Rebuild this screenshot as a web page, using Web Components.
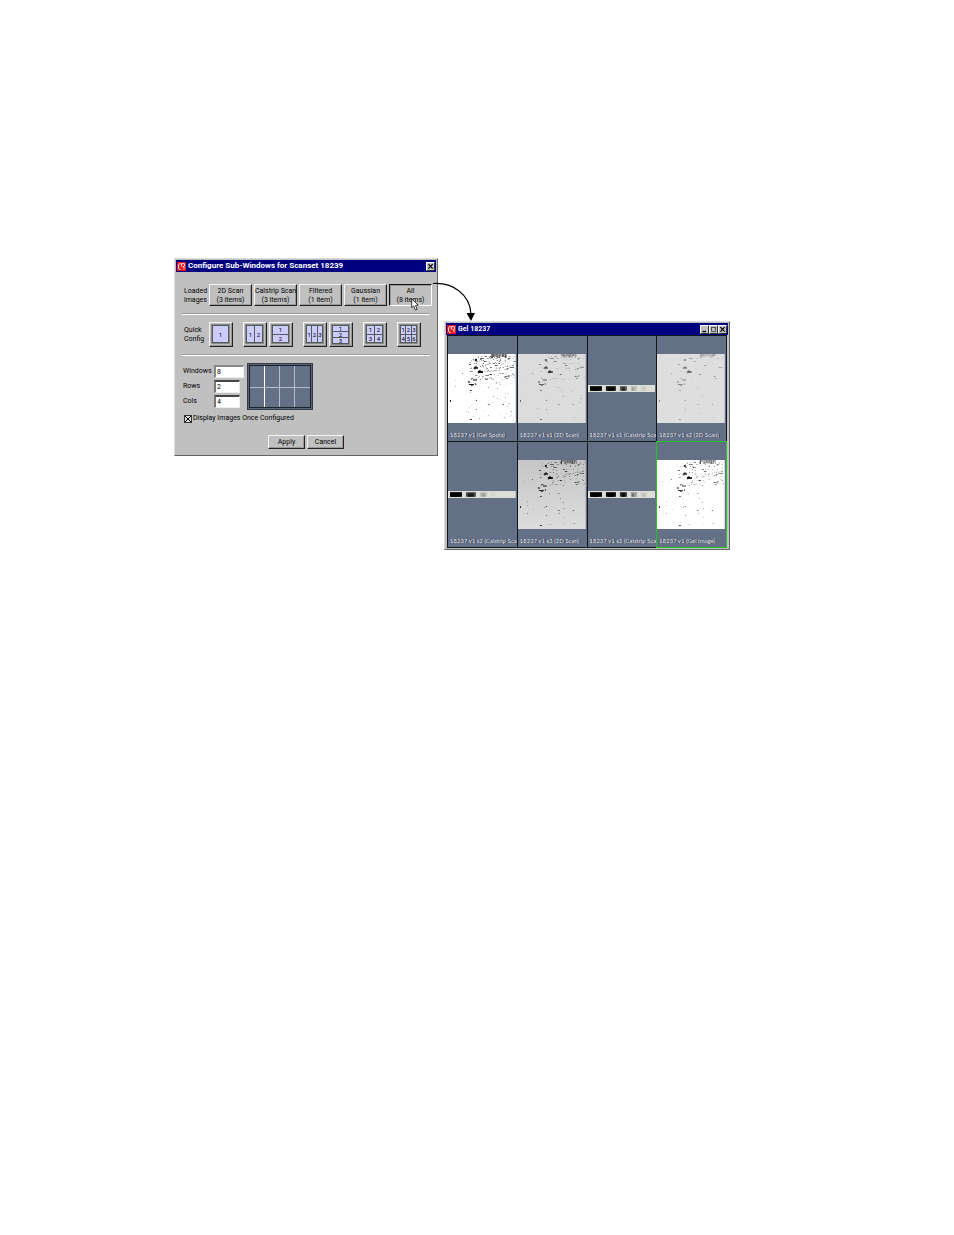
<!DOCTYPE html>
<html lang="en">
<head>
<meta charset="utf-8">
<title>Configure Sub-Windows</title>
<style>
    body {
        margin: 0;
        background: #fff;
        color: #000;
        font: 7px/9px Roboto, "Liberation Sans", Arial, sans-serif;
    }

    /* windows sit freely on the desktop */
    #config {
        position: absolute;
        left: 174px;
        top: 258px;
        width: 264px;
    }

    #gel {
        position: absolute;
        left: 444px;
        top: 321px;
        width: 286px;
    }
</style>
</head>
<body>
<desk-top>
    <app-window id="config" caption="Configure Sub-Windows for Scanset 18239" controls="close">
        <config-form></config-form>
    </app-window>
    <app-window id="gel" caption="Gel 18237" controls="min max close" compact>
        <gel-grid></gel-grid>
    </app-window>
</desk-top>

<script>
class DeskTop extends HTMLElement {

    connectedCallback() {
        this.attachShadow({mode: 'open'}).innerHTML = `
        <style>
        :host {
            display: block;
            position: relative;
            min-height: 100vh;
        }

        svg {
            position: absolute;
            pointer-events: none;
        }

        .arrow {
            left: 430px;
            top: 280px;
        }

        .cursor {
            left: 411px;
            top: 298px;
        }
        </style>
        <slot></slot>
        <svg class="arrow" width="50" height="42" viewBox="0 0 50 42" aria-hidden="true">
            <path d="M3 3.5C22 2 40 14 41 34" fill="none" stroke="#000" stroke-width="1.1"/>
            <path d="M36.5 33L45 33L41 41Z"/>
        </svg>
        <svg class="cursor" width="9" height="13" viewBox="0 0 9 13" aria-hidden="true">
            <path d="M.7 .8V9.6L2.7 7.9L4.4 12L6.2 11.2L4.5 7.3H7.3Z" fill="#fff" stroke="#111" stroke-width=".8"/>
        </svg>
        `;
    }
}

class AppWindow extends HTMLElement {

    connectedCallback() {
        const icons = {
            min: ['Minimize', '<path d="M1.5 5.5H5" stroke="#000" stroke-width="1.4"/>'],
            max: ['Maximize', '<path d="M1.5 1.5H5.5V5.5H1.5Z M1 1.5H6" fill="none" stroke="#555"/>'],
            close: ['Close', '<path d="M1.4 1.2L5.6 5.6M5.6 1.2L1.4 5.6" stroke="#000" stroke-width="1.2"/>']
        };
        const controls = this.getAttribute('controls').split(' ').map(name => `
            <button aria-label="${icons[name][0]}"><svg width="7" height="7" viewBox="0 0 7 7">${icons[name][1]}</svg></button>`).join('');

        this.attachShadow({mode: 'open'}).innerHTML = `
        <style>
        :host {
            display: block;
            box-sizing: border-box;
            background: #c0c0c0;
            border: 1px solid;
            border-color: #dcdcdc #666 #666 #dcdcdc;
            padding: 1px;
        }

        header {
            display: flex;
            align-items: center;
            height: 12px;
            background: #000080;
            color: #fff;
            padding: 0 1px;
            font-weight: bold;
            font-size: 8px;
            line-height: 12px;
        }

        h1 {
            flex: 1;
            margin: 0 0 0 2px;
            font: inherit;
            white-space: nowrap;
        }

        button {
            display: grid;
            place-items: center;
            box-sizing: border-box;
            width: 9px;
            height: 9px;
            padding: 0;
            background: #c0c0c0;
            border: 1px solid;
            border-color: #fff #333 #333 #fff;
        }

        :host([compact]) header {
            font-size: 7px;
        }

        svg {
            flex: none;
        }
        </style>
        <header>
            <svg width="9" height="9" viewBox="0 0 9 9" aria-hidden="true">
                <rect width="9" height="9" fill="#e8131b"/>
                <path d="M3.6 1.6H2.4L1.6 3V6L2.4 7.4H3.8M4.4 4.4V1.7H7.5V4.2M5.4 4.6H7V7.4" fill="none" stroke="#fff" stroke-width=".9"/>
            </svg>
            <h1>${this.getAttribute('caption')}</h1>
            ${controls}
        </header>
        <slot></slot>
        `;
    }
}

class PushButton extends HTMLElement {

    connectedCallback() {
        this.attachShadow({mode: 'open'}).innerHTML = `
        <style>
        :host {
            display: block;
        }

        button {
            box-sizing: border-box;
            width: 100%;
            height: 100%;
            padding: 1px 0 0;
            background: #c0c0c0;
            color: inherit;
            font: inherit;
            text-align: center;
            white-space: nowrap;
            border: 1px solid;
            border-color: #f4f4f4 #222 #222 #f4f4f4;
            box-shadow: inset -1px -1px #999;
        }

        :host([pressed]) button {
            border-color: #111 #fff #fff #111;
            box-shadow: inset 1px 1px #999;
        }
        </style>
        <button aria-pressed="${this.hasAttribute('pressed')}"><slot></slot></button>
        `;
    }
}

class LayoutButton extends HTMLElement {

    connectedCallback() {
        const cols = +this.getAttribute('cols');
        const rows = +this.getAttribute('rows');
        let cells = '';
        for (let i = 1; i <= cols * rows; i++) {
            cells += `<span>${i}</span>`;
        }

        this.attachShadow({mode: 'open'}).innerHTML = `
        <style>
        :host {
            display: block;
            width: 24px;
            height: 25px;
        }

        button {
            box-sizing: border-box;
            display: grid;
            width: 100%;
            height: 100%;
            padding: 1px 2px 2px 1px;
            background: #c0c0c0;
            border: 1px solid;
            border-color: #f4f4f4 #222 #222 #f4f4f4;
            box-shadow: inset -1px -1px #999;
            color: #000;
            font: inherit;
            font-size: 6px;
            line-height: 5px;
        }

        .panes {
            display: grid;
            grid-template: repeat(${rows}, minmax(0, 1fr)) / repeat(${cols}, minmax(0, 1fr));
            gap: 1px;
            padding: 1px;
            background: #555a58;
            border: 1px solid #888c88;
        }

        span {
            display: grid;
            place-items: center;
            background: #ccccff;
        }
        </style>
        <button aria-label="${cols} by ${rows}"><div class="panes">${cells}</div></button>
        `;
    }
}

class ConfigForm extends HTMLElement {

    connectedCallback() {
        this.attachShadow({mode: 'open'}).innerHTML = `
        <style>
        :host {
            display: block;
            padding: 12px 6px 5px 6px;
        }

        .row {
            display: grid;
            grid-template-columns: 25px 1fr;
            align-items: center;
            padding-left: 2px;
        }

        .name {
            padding-top: 1px;
        }

        .loaded {
            display: grid;
            grid-template-columns: repeat(5, 43px);
            grid-auto-rows: 22px;
            gap: 2px;
        }

        .quick {
            display: flex;
            gap: 10px;
        }

        .pair {
            display: flex;
            gap: 2px;
        }

        hr {
            height: 1px;
            margin: 7px 0;
            border: 0;
            border-top: 1px solid #999;
            background: #fff;
        }

        .setup {
            display: flex;
            gap: 3px;
            padding-left: 1px;
        }

        .fields {
            display: grid;
            grid-template-columns: 31px 30px;
            grid-auto-rows: 13px;
            row-gap: 2px;
            align-items: center;
            padding-top: 2px;
        }

        input[type=text] {
            box-sizing: border-box;
            width: 26px;
            height: 13px;
            padding: 0 1px;
            border: 1px solid;
            border-width: 2px 1px 1px 2px;
            border-color: #444 #eee #eee #777;
            background: #fff;
            color: #000;
            font: inherit;
        }

        #windows {
            width: 30px;
            border-color: #888 #eee #eee #888;
        }

        .check {
            display: flex;
            align-items: center;
            gap: 1px;
            margin-top: 4px;
            padding-left: 2px;
        }

        input[type=checkbox] {
            appearance: none;
            width: 8px;
            height: 8px;
            margin: 0;
            border: 1px solid #333;
            box-sizing: border-box;
            background:
                linear-gradient(45deg, transparent 42%, #000 42% 58%, transparent 58%),
                linear-gradient(-45deg, #ddd 42%, #000 42% 58%, #ddd 58%);
        }

        footer {
            display: grid;
            grid-template-columns: 37px 37px;
            grid-auto-rows: 14px;
            justify-content: center;
            gap: 2px;
            margin-top: 12px;
        }
        </style>
        <div class="row">
            <div class="name">Loaded<br>images</div>
            <div class="loaded">
                <push-button>2D Scan<br>(3 items)</push-button>
                <push-button>Calstrip Scan<br>(3 items)</push-button>
                <push-button>Filtered<br>(1 item)</push-button>
                <push-button>Gaussian<br>(1 item)</push-button>
                <push-button pressed>All<br>(8 items)</push-button>
            </div>
        </div>
        <hr>
        <div class="row">
            <div class="name">Quick<br>Config</div>
            <div class="quick">
                <layout-button cols="1" rows="1"></layout-button>
                <div class="pair">
                    <layout-button cols="2" rows="1"></layout-button>
                    <layout-button cols="1" rows="2"></layout-button>
                </div>
                <div class="pair">
                    <layout-button cols="3" rows="1"></layout-button>
                    <layout-button cols="1" rows="3"></layout-button>
                </div>
                <layout-button cols="2" rows="2"></layout-button>
                <layout-button cols="3" rows="2"></layout-button>
            </div>
        </div>
        <hr>
        <div class="setup">
            <div class="fields">
                <label for="windows">Windows</label><input type="text" id="windows" value="8">
                <label for="rows">Rows</label><input type="text" id="rows" value="2">
                <label for="cols">Cols</label><input type="text" id="cols" value="4">
            </div>
            <svg width="66" height="47" viewBox="0 0 66 47" aria-hidden="true">
                <rect width="66" height="47" fill="#353b47"/>
                <rect x="1" y="1" width="64" height="45" fill="#5b6577"/>
                <rect x="2" y="2" width="62" height="43" fill="#1b202b"/>
                <rect x="3" y="3" width="60" height="41" fill="#647086"/>
                <path d="M32.5 3V44M47.5 3V44M3 24.5H63" stroke="#b4bccb"/>
                <path d="M17.5 3V44" stroke="#fff"/>
            </svg>
        </div>
        <div class="check">
            <input type="checkbox" id="display" checked>
            <label for="display">Display Images Once Configured</label>
        </div>
        <footer>
            <push-button>Apply</push-button>
            <push-button>Cancel</push-button>
        </footer>
        `;
    }
}

// main protein spots: x, y, width, height, darkness
const SPOTS = [
    [30, 17, 5, 2, 1], [31, 16, 2, 3, .7], [26, 13, 4, 2, .8], [27, 12, 2, 2, .5],
    [27, 5, 2, 2, .9], [32, 4, 4, 1, .6], [21, 10, 2, 1, .7],
    [21, 30, 5, 1, .9], [23, 31, 2, 1, .7], [20, 27, 2, 2, .6], [25, 25, 4, 2, .5],
    [22, 36, 2, 1, .7], [27, 29, 1, 2, .7], [42, 20, 2, 1, .8], [47, 11, 2, 1, .7],
    [2, 46, 1, 2, .9], [22, 65, 2, 1, .8], [55, 50, 1, 1, .8], [40, 50, 2, 1, .5],
    [28, 46, 1, 1, .8], [28, 55, 1, 1, .6], [62, 13, 2, 1, .6], [57, 22, 2, 1, .5],
    [56, 63, 1, 1, .5], [14, 19, 1, 1, .6], [36, 7, 3, 1, .5], [45, 42, 1, 1, .5],
    [40, 33, 1, 1, .5]
];

class GelCell extends HTMLElement {

    connectedCallback() {
        const picture = this.hasAttribute('strip') ? this.strip() : this.scan();

        this.attachShadow({mode: 'open'}).innerHTML = `
        <style>
        :host {
            display: grid;
            grid-template-rows: 18px 69px 1fr;
            min-width: 0;
            background: #647086;
            overflow: hidden;
        }

        svg {
            grid-row: 2;
            align-self: center;
            width: 100%;
            box-sizing: border-box;
            padding-right: 1px;
        }

        p {
            grid-row: 3;
            margin: 0;
            padding: 6px 0 0 2px;
            color: #e6e8ec;
            font-family: Lato, "Liberation Sans", Arial, sans-serif;
            font-size: 6px;
            line-height: 11px;
            white-space: nowrap;
            text-shadow: 1px 0 #222936;
        }

        :host([selected]) {
            outline: 1px solid #22c522;
            z-index: 1;
        }
        </style>
        ${picture}
        <p>${this.getAttribute('label')}</p>
        `;
    }

    strip() {
        const bands = this.getAttribute('strip').split(' ').map((shade, i) => {
            const width = [12, 10, 7, 6, 6][i];
            return `<rect x="${[2, 18, 32, 43, 53][i]}" y="1" width="${width}" height="4" opacity="${shade}"/>
                <rect x="${[3, 20, 34, 44, 55][i]}" y="2" width="${width - 4}" height="3" opacity="${shade}"/>`;
        }).join('');
        return `<svg height="7" viewBox="0 0 68 6" preserveAspectRatio="none" aria-hidden="true"><rect width="68" height="6" fill="#deded8"/>${bands}</svg>`;
    }

    scan() {
        const dark = +this.getAttribute('dark');
        const count = +this.getAttribute('count');
        const paper = this.getAttribute('paper');
        let seed = 7143;
        const random = () => {
            seed = (seed * 16807) % 2147483647;
            return seed / 2147483647;
        };
        const spot = (x, y, w, h, o) => `<rect x="${x}" y="${y}" width="${w}" height="${h}" opacity="${Math.min(1, o * dark).toFixed(2)}"/>`;

        let spots = SPOTS.map(s => spot(...s)).join('');
        // crowded upper right part
        for (let i = 0; i < count; i++) {
            const y = Math.floor(2 + 24 * Math.pow(random(), 1.3));
            const x = Math.floor(22 + 45 * random());
            spots += spot(x, y, random() > .85 ? 2 : 1, 1, .1 + random() * .5);
        }
        for (let i = 0; i < count / 4; i++) {
            spots += spot(Math.floor(4 + random() * 62), Math.floor(14 + random() * 51), 1, 1, .1 + random() * .35);
        }
        // smear along the upper edge
        for (let i = 0; i < 16; i++) {
            spots += spot(43 + i, 0, 1, 2 + Math.floor(random() * 3), .25 + random() * .5);
        }
        return `
        <svg height="69" viewBox="0 0 68 69" preserveAspectRatio="none" aria-hidden="true">
            <defs>
                <linearGradient id="paper" x2="0" y2="1">
                    <stop offset="0" stop-color="${this.getAttribute('top') || paper}"/>
                    <stop offset="1" stop-color="${paper}"/>
                </linearGradient>
            </defs>
            <rect width="68" height="69" fill="url(#paper)"/>${spots}
        </svg>`;
    }
}

class GelGrid extends HTMLElement {

    connectedCallback() {
        this.attachShadow({mode: 'open'}).innerHTML = `
        <style>
        :host {
            display: grid;
            grid-template-columns: repeat(4, minmax(0, 1fr));
            grid-auto-rows: 105px;
            gap: 1px;
            margin: 0 1px;
            padding: 1px;
            background: #10141c;
        }
        </style>
        <gel-cell label="18237 v1 (Gel Spots)" paper="#fff" dark="1" count="190"></gel-cell>
        <gel-cell label="18237 v1 s1 (2D Scan)" paper="#dcdcdc" dark=".6" count="65"></gel-cell>
        <gel-cell label="18237 v1 s1 (Calstrip Sca" strip="1 .9 .6 .15 .05"></gel-cell>
        <gel-cell label="18237 v1 s2 (2D Scan)" paper="#dedede" dark=".4" count="20"></gel-cell>
        <gel-cell label="18237 v1 s2 (Calstrip Sca" strip="1 .65 .15 .02 0"></gel-cell>
        <gel-cell label="18237 v1 s3 (2D Scan)" paper="#dcdcdc" top="#c6c6c6" dark=".9" count="110"></gel-cell>
        <gel-cell label="18237 v1 s3 (Calstrip Sca" strip="1 .95 .8 .3 .08"></gel-cell>
        <gel-cell label="18237 v1 (Gel Image)" paper="#fff" dark=".85" count="110" selected></gel-cell>
        `;
    }
}

customElements.define('push-button', PushButton);
customElements.define('layout-button', LayoutButton);
customElements.define('gel-cell', GelCell);
customElements.define('gel-grid', GelGrid);
customElements.define('config-form', ConfigForm);
customElements.define('app-window', AppWindow);
customElements.define('desk-top', DeskTop);
</script>
</body>
</html>
